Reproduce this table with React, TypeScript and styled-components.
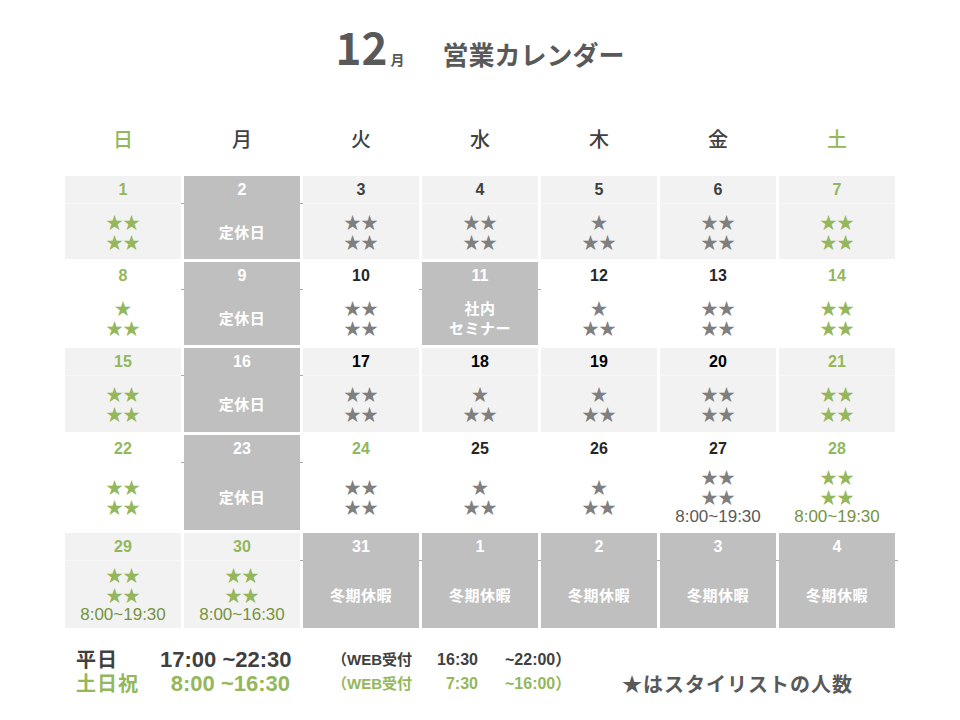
import styled, { createGlobalStyle } from "styled-components";

const GREEN = "#93b75a";
const GREEN_DARK = "#77933c";
const GREY_STAR = "#7f7f7f";
const JP = `"Noto Sans CJK JP", sans-serif`;
const MIX = `"Liberation Sans", "Noto Sans CJK JP", sans-serif`;

const GlobalStyle = createGlobalStyle`
  html, body {
    margin: 0;
    padding: 0;
    background: #fff;
  }
  body {
    font-family: ${MIX};
  }
`;

type Kind = "light" | "white" | "closed";
type Tone = "green" | "mid" | "dark" | "black";

interface Day {
  d: number;
  kind: Kind;
  tone?: Tone;
  stars?: string;
  greenStars?: boolean;
  label?: string;
  time?: string;
}

const toneColor: Record<Tone, string> = {
  green: GREEN,
  mid: "#404040",
  dark: "#262626",
  black: "#000",
};

const bgColor: Record<Kind, string> = {
  light: "#f2f2f2",
  white: "#ffffff",
  closed: "#bfbfbf",
};

const Page = styled.div`
  width: 960px;
  height: 720px;
  background: #fff;
  overflow: hidden;
`;

const TitleBar = styled.div`
  height: 100px;
  box-sizing: border-box;
  padding-top: 24px;
  display: flex;
  justify-content: center;
  align-items: baseline;
  color: #595959;
  font-family: ${JP};
`;

const MonthNum = styled.span`
  font-size: 44px;
  line-height: 44px;
  font-weight: 700;
`;

const MonthUnit = styled.span`
  font-size: 14px;
  font-weight: 700;
  margin-left: 3px;
`;

const TitleText = styled.span`
  font-size: 26px;
  font-weight: 700;
  margin-left: 38px;
`;

const Board = styled.div`
  width: 830px;
  margin: 0 auto;
`;

const WeekRow = styled.div`
  height: 76px;
  display: grid;
  grid-template-columns: repeat(7, 116px);
  column-gap: 3px;
  align-items: center;
`;

const WeekName = styled.div<{ $green?: boolean }>`
  text-align: center;
  font-family: ${JP};
  font-size: 20px;
  font-weight: 500;
  color: ${(p) => (p.$green ? GREEN : "#404040")};
`;

const Grid = styled.div`
  display: grid;
  grid-template-columns: repeat(7, 116px);
  grid-template-rows: 83px 83px 84px 95px 95px;
  gap: 3px;
`;

const Cell = styled.div<{ $kind: Kind }>`
  display: flex;
  flex-direction: column;
  background: ${(p) => bgColor[p.$kind]};
  text-align: center;
`;

const DayNum = styled.div<{ $color: string }>`
  height: 27px;
  line-height: 27px;
  font-size: 16px;
  font-weight: 700;
  color: ${(p) => p.$color};
`;

const Body = styled.div<{ $kind: Kind }>`
  position: relative;
  flex: 1;
  display: flex;
  flex-direction: column;
  justify-content: center;
  border-top: 1px solid
    ${(p) => (p.$kind === "light" ? "#f8f8f8" : p.$kind === "closed" ? "#bfbfbf" : "#fff")};

  &::before,
  &::after {
    content: "";
    position: absolute;
    top: -1px;
    width: 3px;
    height: 1px;
    background: ${(p) => (p.$kind === "closed" ? "#a9a9a9" : "transparent")};
  }
  &::before {
    left: -3px;
  }
  &::after {
    right: -3px;
  }
`;

const Stars = styled.div<{ $green?: boolean }>`
  font-family: ${JP};
  font-size: 17px;
  line-height: 20px;
  white-space: pre-line;
  color: ${(p) => (p.$green ? GREEN : GREY_STAR)};
`;

const Hours = styled.div<{ $green?: boolean }>`
  font-size: 17px;
  line-height: 20px;
  color: ${(p) => (p.$green ? GREEN_DARK : "#595959")};
`;

const Closed = styled.div`
  font-family: ${JP};
  font-size: 15px;
  line-height: 20px;
  font-weight: 700;
  color: #fff;
  letter-spacing: 0.5px;
  white-space: pre-line;
`;

const Footer = styled.div`
  margin-top: 20px;
  padding-left: 11px;
  display: grid;
  grid-template-columns: 84px 130px 130px 58px 144px 1fr;
  grid-template-rows: 24px 24px;
  align-items: center;
  white-space: nowrap;
`;

const FootLabel = styled.div<{ $green?: boolean }>`
  font-size: 20px;
  line-height: 24px;
  font-weight: 700;
  letter-spacing: 1px;
  color: ${(p) => (p.$green ? GREEN : "#404040")};
`;

const FootTime = styled.div<{ $green?: boolean }>`
  text-align: right;
  font-size: 22px;
  line-height: 24px;
  font-weight: 700;
  color: ${(p) => (p.$green ? GREEN : "#404040")};
`;

const WebLabel = styled.div<{ $green?: boolean }>`
  padding-left: 42px;
  font-size: 15px;
  line-height: 24px;
  font-weight: 700;
  color: ${(p) => (p.$green ? GREEN : "#404040")};
`;

const WebTime = styled.div<{ $green?: boolean }>`
  text-align: right;
  font-size: 16px;
  line-height: 24px;
  font-weight: 700;
  color: ${(p) => (p.$green ? GREEN : "#404040")};
`;

const WebEnd = styled.div<{ $green?: boolean }>`
  padding-left: 27px;
  font-size: 16px;
  line-height: 24px;
  font-weight: 700;
  color: ${(p) => (p.$green ? GREEN : "#404040")};
`;

const Legend = styled.div`
  grid-row: 2;
  grid-column: 6;
  font-family: ${JP};
  font-size: 20px;
  line-height: 24px;
  font-weight: 700;
  letter-spacing: 1px;
  color: #595959;
`;

const S2 = "★★\n★★";
const S1 = "★\n★★";

const off = (d: number): Day => ({ d, kind: "closed", label: "定休日" });
const winter = (d: number): Day => ({ d, kind: "closed", label: "冬期休暇" });

const days: Day[] = [
  { d: 1, kind: "light", tone: "green", stars: S2, greenStars: true },
  off(2),
  { d: 3, kind: "light", tone: "mid", stars: S2 },
  { d: 4, kind: "light", tone: "mid", stars: S2 },
  { d: 5, kind: "light", tone: "mid", stars: S1 },
  { d: 6, kind: "light", tone: "mid", stars: S2 },
  { d: 7, kind: "light", tone: "green", stars: S2, greenStars: true },

  { d: 8, kind: "white", tone: "green", stars: S1, greenStars: true },
  off(9),
  { d: 10, kind: "white", tone: "dark", stars: S2 },
  { d: 11, kind: "closed", label: "社内\nセミナー" },
  { d: 12, kind: "white", tone: "dark", stars: S1 },
  { d: 13, kind: "white", tone: "dark", stars: S2 },
  { d: 14, kind: "white", tone: "green", stars: S2, greenStars: true },

  { d: 15, kind: "light", tone: "green", stars: S2, greenStars: true },
  off(16),
  { d: 17, kind: "light", tone: "black", stars: S2 },
  { d: 18, kind: "light", tone: "black", stars: S1 },
  { d: 19, kind: "light", tone: "black", stars: S1 },
  { d: 20, kind: "light", tone: "black", stars: S2 },
  { d: 21, kind: "light", tone: "green", stars: S2, greenStars: true },

  { d: 22, kind: "white", tone: "green", stars: S2, greenStars: true },
  off(23),
  { d: 24, kind: "white", tone: "green", stars: S2 },
  { d: 25, kind: "white", tone: "dark", stars: S1 },
  { d: 26, kind: "white", tone: "dark", stars: S1 },
  { d: 27, kind: "white", tone: "dark", stars: S2, time: "8:00~19:30" },
  { d: 28, kind: "white", tone: "green", stars: S2, greenStars: true, time: "8:00~19:30" },

  { d: 29, kind: "light", tone: "green", stars: S2, greenStars: true, time: "8:00~19:30" },
  { d: 30, kind: "light", tone: "green", stars: S2, greenStars: true, time: "8:00~16:30" },
  winter(31),
  winter(1),
  winter(2),
  winter(3),
  winter(4),
];

const weekNames = ["日", "月", "火", "水", "木", "金", "土"];

function DayCell({ day }: { day: Day }) {
  const numColor = day.kind === "closed" ? "#fff" : toneColor[day.tone ?? "dark"];
  return (
    <Cell $kind={day.kind}>
      <DayNum $color={numColor}>{day.d}</DayNum>
      <Body $kind={day.kind}>
        {day.stars && <Stars $green={day.greenStars}>{day.stars}</Stars>}
        {day.time && <Hours $green={day.greenStars}>{day.time}</Hours>}
        {day.label && <Closed>{day.label}</Closed>}
      </Body>
    </Cell>
  );
}

function App() {
  return (
    <Page>
      <GlobalStyle />
      <TitleBar>
        <MonthNum>12</MonthNum>
        <MonthUnit>月</MonthUnit>
        <TitleText>営業カレンダー</TitleText>
      </TitleBar>
      <Board>
        <WeekRow>
          {weekNames.map((w, i) => (
            <WeekName key={w} $green={i === 0 || i === 6}>
              {w}
            </WeekName>
          ))}
        </WeekRow>
        <Grid>
          {days.map((day, i) => (
            <DayCell key={i} day={day} />
          ))}
        </Grid>
        <Footer>
          <FootLabel>平日</FootLabel>
          <FootTime>17:00 ~22:30</FootTime>
          <WebLabel>（WEB受付</WebLabel>
          <WebTime>16:30</WebTime>
          <WebEnd>~22:00）</WebEnd>
          <div />
          <FootLabel $green>土日祝</FootLabel>
          <FootTime $green>8:00 ~16:30</FootTime>
          <WebLabel $green>（WEB受付</WebLabel>
          <WebTime $green>7:30</WebTime>
          <WebEnd $green>~16:00）</WebEnd>
          <Legend>★はスタイリストの人数</Legend>
        </Footer>
      </Board>
    </Page>
  );
}

export default App;
